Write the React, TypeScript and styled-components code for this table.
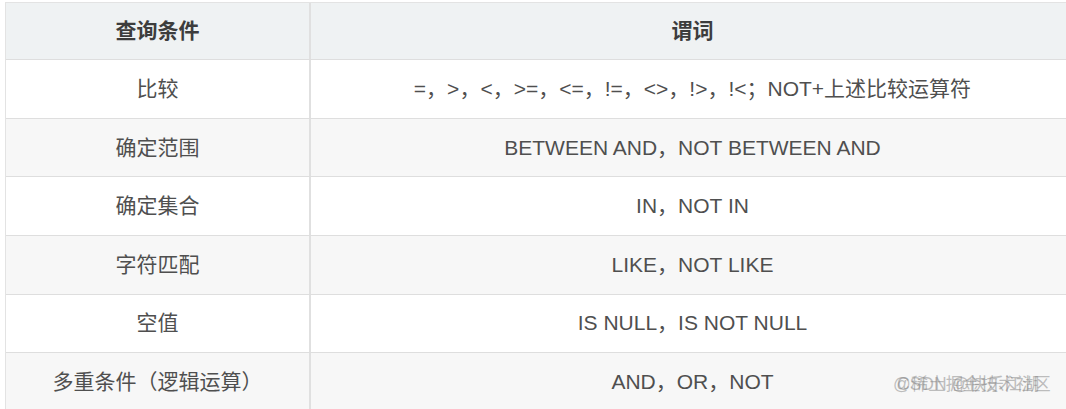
import styled, { createGlobalStyle } from "styled-components";

const Global = createGlobalStyle`
  html, body {
    margin: 0;
    padding: 0;
    background: #fff;
    overflow: hidden;
  }
  body {
    font-family: "Liberation Sans", "Noto Sans CJK SC", sans-serif;
  }
`;

const rows: [string, string][] = [
  ["比较", "=，>，<，>=，<=，!=，<>，!>，!<；NOT+上述比较运算符"],
  ["确定范围", "BETWEEN AND，NOT BETWEEN AND"],
  ["确定集合", "IN，NOT IN"],
  ["字符匹配", "LIKE，NOT LIKE"],
  ["空值", "IS NULL，IS NOT NULL"],
  ["多重条件（逻辑运算）", "AND，OR，NOT"],
];

const Page = styled.div`
  position: relative;
  width: 1066px;
  height: 409px;
  padding: 2px 0 0 5px;
  box-sizing: border-box;
  overflow: hidden;
`;

const Table = styled.div`
  width: 1068px;
  border-top: 1px solid #e3e3e3;
  border-left: 1px solid #e3e3e3;
`;

const Row = styled.div<{ $bg: string; $head?: boolean }>`
  display: grid;
  grid-template-columns: 305px 1fr;
  height: ${(p) => (p.$head ? "57.2px" : "58.6px")};
  box-sizing: border-box;
  border-bottom: 1px solid #dedede;
  background: ${(p) => p.$bg};
`;

const Cell = styled.div<{ $head?: boolean; $first?: boolean }>`
  display: flex;
  align-items: center;
  justify-content: center;
  padding-bottom: 4px;
  font-size: 21px;
  color: ${(p) => (p.$head ? "#3d3d3d" : "#4f4f4f")};
  font-weight: ${(p) => (p.$head ? 700 : 400)};
  border-right: ${(p) => (p.$first ? "2px solid #e0e0e0" : "none")};
  white-space: nowrap;
`;

const Watermark = styled.div`
  position: absolute;
  left: 893px;
  top: 370px;
  font-size: 17.5px;
  color: rgba(130, 130, 130, 0.5);
  white-space: nowrap;
`;

const Layer = styled.span<{ $shift?: number }>`
  position: absolute;
  left: ${(p) => p.$shift ?? 0}px;
  top: 0;
`;

export default function App() {
  return (
    <>
      <Global />
      <Page>
        <Table>
          <Row $head $bg="#eff2f3">
            <Cell $head $first>
              查询条件
            </Cell>
            <Cell $head>谓词</Cell>
          </Row>
          {rows.map(([a, b], i) => (
            <Row key={a} $bg={i % 2 === 0 ? "#ffffff" : "#f7f7f7"}>
              <Cell $first>{a}</Cell>
              <Cell>{b}</Cell>
            </Row>
          ))}
        </Table>
        <Watermark>
          <Layer>@稀土掘金技术社区</Layer>
          <Layer $shift={4}>CSDN @快乐江湖</Layer>
        </Watermark>
      </Page>
    </>
  );
}
